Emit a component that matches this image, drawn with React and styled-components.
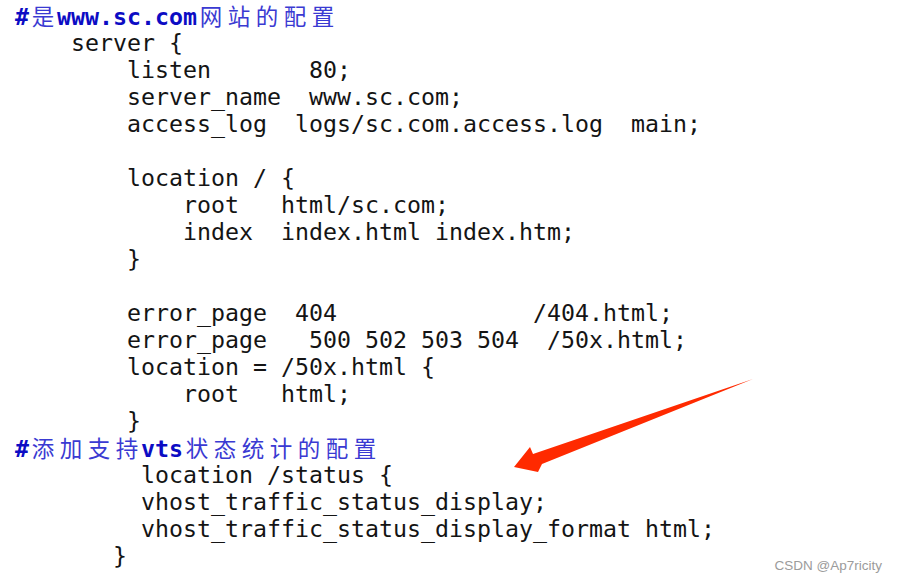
import React from "react"
import styled, { createGlobalStyle } from "styled-components"

const Global = createGlobalStyle`
  html, body {
    margin: 0;
    padding: 0;
    background: #fff;
  }
`

const Page = styled.div`
  position: relative;
  width: 897px;
  height: 582px;
  overflow: hidden;
  background: #fff;
`

const Code = styled.pre`
  margin: 0;
  padding: 2px 0 0 15px;
  font-family: "DejaVu Sans Mono", "Liberation Mono", monospace;
  font-size: 23.25px;
  line-height: 27px;
  color: #141414;
  white-space: pre;
`

const Line = styled.div`
  height: 27px;
  padding-left: ${p => (p.indent || 0) * 14}px;
`

const Comment = styled.span`
  color: #0c0cc4;
  font-weight: bold;
`

// CJK glyphs take two terminal cells each
const Wide = styled.span`
  display: inline-block;
  width: 28px;
  text-align: center;
  font-family: "Noto Sans CJK SC", sans-serif;
  font-weight: 400;
  font-size: 22.5px;
  color: #3a3ad2;
`

const Arrow = styled.svg`
  position: absolute;
  left: 0;
  top: 0;
  pointer-events: none;
`

const Watermark = styled.div`
  position: absolute;
  right: 15px;
  bottom: 9px;
  font-family: "Liberation Sans", Arial, sans-serif;
  font-size: 13.5px;
  color: #9b9b9b;
`

const Cjk = ({ text }) =>
  [...text].map((c, i) => <Wide key={i}>{c}</Wide>)

const lines = [
  [4, "server {"],
  [8, "listen       80;"],
  [8, "server_name  www.sc.com;"],
  [8, "access_log  logs/sc.com.access.log  main;"],
  [0, ""],
  [8, "location / {"],
  [12, "root   html/sc.com;"],
  [12, "index  index.html index.htm;"],
  [8, "}"],
  [0, ""],
  [8, "error_page  404              /404.html;"],
  [8, "error_page   500 502 503 504  /50x.html;"],
  [8, "location = /50x.html {"],
  [12, "root   html;"],
  [8, "}"],
]

const tail = [
  [9, "location /status {"],
  [9, "vhost_traffic_status_display;"],
  [9, "vhost_traffic_status_display_format html;"],
  [7, "}"],
]

export default function App() {
  return (
    <Page>
      <Global />
      <Code>
        <Line>
          <Comment>#</Comment>
          <Cjk text="是" />
          <Comment>www.sc.com</Comment>
          <Cjk text="网站的配置" />
        </Line>
        {lines.map(([indent, text], i) => (
          <Line key={i} indent={indent}>
            {text}
          </Line>
        ))}
        <Line>
          <Comment>#</Comment>
          <Cjk text="添加支持" />
          <Comment>vts</Comment>
          <Cjk text="状态统计的配置" />
        </Line>
        {tail.map(([indent, text], i) => (
          <Line key={i} indent={indent}>
            {text}
          </Line>
        ))}
      </Code>

      <Arrow width="897" height="582" viewBox="0 0 897 582">
        <polygon
          points="514,467 530,447 533,454 753,379 542,464 538,472"
          fill="#ff2a00"
        />
      </Arrow>

      <Watermark>CSDN @Ap7ricity</Watermark>
    </Page>
  )
}
